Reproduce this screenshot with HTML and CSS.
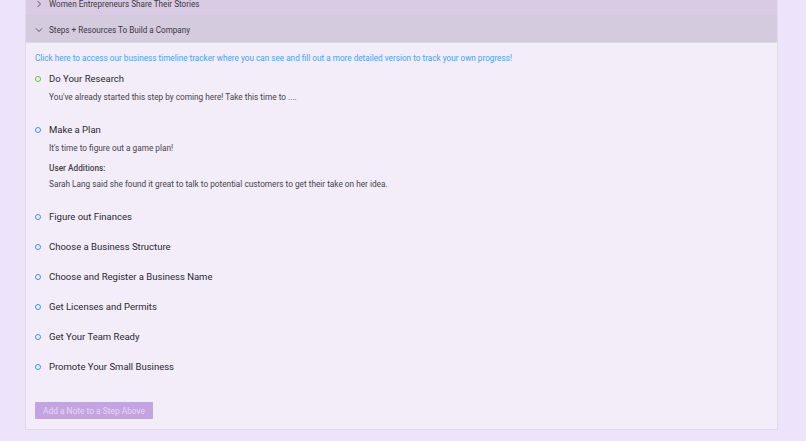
FILE: index.html
```html
<!DOCTYPE html>
<html lang="en">
<head>
  <meta charset="UTF-8" />
  <meta name="viewport" content="width=device-width, initial-scale=1.0"/>
  <title>Steps + Resources</title>
  <link rel="stylesheet" href="styles.css">
</head>
<body>
  <div class="collapse">
    <div class="panel first">
      <div class="panel-header">
        <svg class="arrow" viewBox="0 0 8 8"><polyline points="2.5,1 5.5,4 2.5,7"/></svg>
        Women Entrepreneurs Share Their Stories
      </div>
    </div>
    <div class="panel active">
      <div class="panel-header">
        <svg class="arrow" viewBox="0 0 8 8"><polyline points="1,2.5 4,5.5 7,2.5"/></svg>
        Steps + Resources To Build a Company
      </div>
      <div class="panel-content">
        <a class="tracker-link" href="#">Click here to access our business timeline tracker where you can see and fill out a more detailed version to track your own progress!</a>
        <ul class="timeline">
          <li class="item done">
            <span class="dot"></span>
            <h4>Do Your Research</h4>
            <p>You've already started this step by coming here! Take this time to ....</p>
          </li>
          <li class="item">
            <span class="dot"></span>
            <h4>Make a Plan</h4>
            <p>It's time to figure out a game plan!</p>
            <p class="sub">User Additions:</p>
            <p>Sarah Lang said she found it great to talk to potential customers to get their take on her idea.</p>
          </li>
          <li class="item"><span class="dot"></span><h4>Figure out Finances</h4></li>
          <li class="item"><span class="dot"></span><h4>Choose a Business Structure</h4></li>
          <li class="item"><span class="dot"></span><h4>Choose and Register a Business Name</h4></li>
          <li class="item"><span class="dot"></span><h4>Get Licenses and Permits</h4></li>
          <li class="item"><span class="dot"></span><h4>Get Your Team Ready</h4></li>
          <li class="item"><span class="dot"></span><h4>Promote Your Small Business</h4></li>
        </ul>
        <button class="note-button" disabled>Add a Note to a Step Above</button>
      </div>
    </div>
  </div>
</body>
</html>
```

FILE: styles.css
```css
body {
  margin: 0;
  background: #ede3fb;
  font-family: Roboto, "Noto Sans", sans-serif;
  color: #333;
}
.collapse {
  margin: -11px 28px 0 25px;
  border: 1px solid #e2d9ea;
  border-top: 0;
}
.panel-header {
  display: flex;
  align-items: center;
  height: 27px;
  padding-left: 9px;
  font-size: 8.15px;
  color: #3c3744;
  background: #d9cbe3;
  border-bottom: 1px solid #d3c8dd;
  box-sizing: border-box;
}
.first .panel-header {
  padding-top: 3px;
}
.active .panel-header {
  background: #d4cbdf;
  border-bottom-color: #e0d6ea;
  padding-top: 1px;
}
.arrow {
  width: 8px;
  height: 8px;
  margin-right: 6px;
  fill: none;
  stroke: #5a5462;
  stroke-width: 1;
}
.panel-content {
  background: #f2edf8;
  padding: 10px 9px 10px;
}
.tracker-link {
  display: block;
  font-size: 8.2px;
  color: #4c9ff0;
  text-decoration: none;
  margin-bottom: 8px;
}
.timeline {
  list-style: none;
  margin: 0;
  padding: 0;
}
.item {
  position: relative;
  padding-left: 14px;
  padding-bottom: 14px;
}
.dot {
  position: absolute;
  left: 0;
  top: 5px;
  width: 4px;
  height: 4px;
  border: 1.5px solid #3f91f0;
  border-radius: 50%;
}
.done .dot {
  border-color: #6cbf3c;
}
.item h4 {
  margin: 0;
  font-size: 9.5px;
  font-weight: 400;
  line-height: 16px;
  color: #2b2832;
}
.item p {
  margin: 5px 0 6px;
  font-size: 8.25px;
  line-height: 10px;
  color: #47434d;
}
.item p.sub {
  font-weight: 500;
  margin-top: 10px;
}
.note-button {
  margin-top: 13px;
  width: 118px;
  height: 17px;
  border: 0;
  border-radius: 1px;
  background: #c3a4e2;
  color: #e6d8f4;
  font-family: inherit;
  font-size: 8.4px;
  padding: 0;
}
```
